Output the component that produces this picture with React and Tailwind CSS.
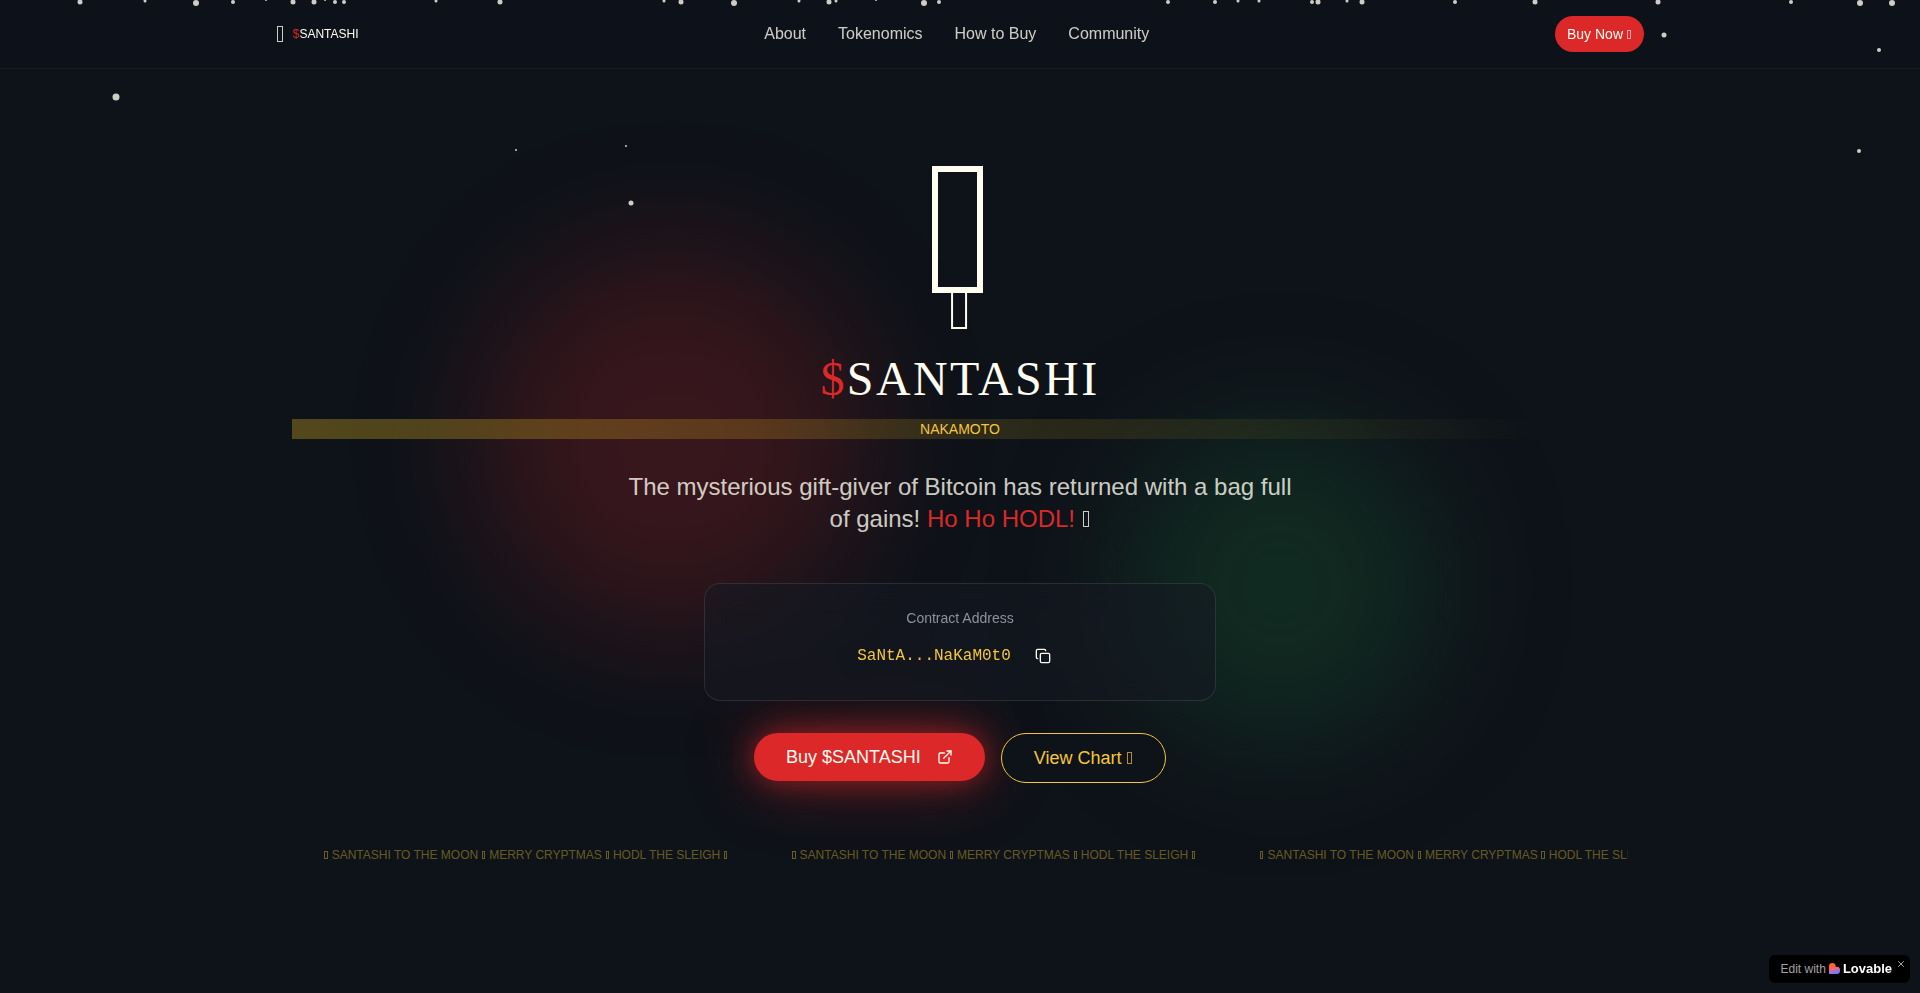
import React from 'react';
import { Copy, ExternalLink, X } from 'lucide-react';

const navLinks = [
  { label: 'About', href: '#about' },
  { label: 'Tokenomics', href: '#tokenomics' },
  { label: 'How to Buy', href: '#how-to-buy' },
  { label: 'Community', href: '#community' },
];

// [center x in % of the width, center y in px, size in px]
const snowflakes = [
  [4.17, 2, 5], [7.55, 1, 3], [10.2, 3, 6], [12.13, 2, 4], [13.85, 0, 2],
  [15.28, 2, 5], [16.38, 2, 5], [16.93, 0, 2], [17.45, 2, 4], [17.92, 2, 4],
  [22.71, 1, 3], [26.04, 2, 5], [34.6, 1, 3], [35.49, 2, 5], [38.23, 3, 6],
  [41.6, 1, 3], [43.2, 2, 5], [43.52, 1, 3], [45.6, 0, 2], [48.12, 3, 6],
  [48.9, 2, 4], [60.83, 2, 4], [63.28, 2, 4], [64.48, 1, 3], [65.57, 1, 3],
  [68.33, 2, 4], [68.62, 2, 5], [70.16, 1, 3], [70.94, 2, 5], [75.78, 2, 4],
  [79.97, 2, 5], [86.33, 2, 5], [93.28, 2, 4], [96.88, 3, 6], [98.54, 3, 6],
  [86.65, 35, 5], [97.86, 50, 4], [6.02, 97, 7], [26.88, 150, 2],
  [32.6, 146, 2], [32.86, 203, 5], [96.82, 151, 4],
];

// Narrow box symbol, scales with the surrounding text
const Symbol = () => (
  <span
    aria-hidden="true"
    className="ml-[0.035em] mr-[0.065em] inline-block h-[0.66em] w-[0.265em] border-[max(1px,0.034em)] border-current"
  />
);

const Snowfall = () => (
  <div className="fixed inset-0 z-50 overflow-hidden pointer-events-none" aria-hidden="true">
    {snowflakes.map(([x, y, size], i) => (
      <span
        key={i}
        className="absolute -translate-x-1/2 -translate-y-1/2 rounded-full bg-[#fffdf0]/80"
        style={{ left: `${x}%`, top: y, width: size, height: size }}
      />
    ))}
  </div>
);

const Navbar = () => (
  <nav className="fixed inset-x-0 top-0 z-40 border-b border-[#181e29] bg-[#0e1219]/80 backdrop-blur-md">
    <div className="mx-auto flex max-w-[1400px] items-center justify-between px-4 py-4">
      <a href="#home" className="flex items-center gap-2">
        <span className="text-2xl leading-8 text-[#fffdf0]/80"><Symbol /></span>
        <span className="text-xs">
          <span className="text-[#dc2828]">$</span>SANTASHI
        </span>
      </a>
      <div className="flex items-center gap-8">
        {navLinks.map((link) => (
          <a key={link.href} href={link.href} className="text-[#fffdf0]/80 hover:text-[#f5c63c]">
            {link.label}
          </a>
        ))}
      </div>
      <button className="h-9 rounded-full bg-[#dc2828] px-3 text-sm hover:bg-red-700">
        Buy Now <span className="opacity-60"><Symbol /></span>
      </button>
    </div>
  </nav>
);

const ContractCard = () => (
  <div className="mx-auto mb-8 w-full max-w-lg rounded-2xl border border-white/10 bg-[#161922]/55 p-6 backdrop-blur-lg">
    <p className="mb-2 text-sm text-[#8b93a1]">Contract Address</p>
    <div className="flex items-center justify-center gap-3">
      <code className="font-['Liberation_Mono',monospace] text-base text-[#f5c63c]">SaNtA...NaKaM0t0</code>
      <button aria-label="Copy address" className="flex h-10 w-10 items-center justify-center rounded-md hover:bg-white/10">
        <Copy className="h-4 w-4" />
      </button>
    </div>
  </div>
);

const Ticker = () => (
  <div className="mt-16 flex overflow-hidden whitespace-nowrap text-xs text-[#f5d030]/40">
    {[0, 1, 2].map((i) => (
      <span key={i} className="mx-8 shrink-0">
        <Symbol /> SANTASHI TO THE MOON <Symbol /> MERRY CRYPTMAS <Symbol /> HODL THE SLEIGH <Symbol />
      </span>
    ))}
  </div>
);

const Hero = () => (
  <section id="home" className="relative flex min-h-screen items-center justify-center overflow-hidden">
    <div className="absolute left-1/4 top-1/4 h-96 w-96 rounded-full bg-[#dc2828]/20 blur-3xl" />
    <div className="absolute bottom-1/4 right-1/4 h-80 w-80 rounded-full bg-[#166534]/30 blur-3xl" />

    <div className="relative w-full max-w-[1400px] px-8 text-center">
      <div className="relative mb-8">
        <div className="text-[192px] leading-none"><Symbol /></div>
        <div className="absolute -bottom-4 left-1/2 -translate-x-1/2 text-6xl"><Symbol /></div>
      </div>

      <h1 className="mb-4 font-['Liberation_Serif',serif] text-5xl tracking-wider">
        <span className="text-[#dc2828]">$</span>SANTASHI
      </h1>
      <p className="mb-8 bg-linear-to-r from-[#f5c820]/30 to-transparent to-95% text-sm text-[#f5c63c]">NAKAMOTO</p>

      <p className="mx-auto mb-12 max-w-2xl text-2xl text-[#fffdf0]/80">
        The mysterious gift-giver of Bitcoin has returned with a bag full of gains!{' '}
        <span className="text-[#dc2828]">Ho Ho HODL!</span> <Symbol />
      </p>

      <ContractCard />

      <div className="flex items-start justify-center gap-4">
        <button className="flex h-12 items-center gap-4 rounded-full bg-[#dc2828] px-8 text-lg shadow-[0_0_30px_rgba(220,40,40,0.6),0_0_70px_rgba(220,40,40,0.4)]">
          Buy $SANTASHI
          <ExternalLink className="h-4 w-4" />
        </button>
        <button className="rounded-full border border-[#f5c63c] bg-[#0e1219] px-8 py-2.5 text-lg text-[#f5c63c]">
          View Chart <span className="opacity-70"><Symbol /></span>
        </button>
      </div>

      <Ticker />
    </div>
  </section>
);

const LovableBadge = () => (
  <div className="fixed bottom-2.5 right-2.5 z-50 flex h-7 items-center rounded-md bg-black pl-3 pr-1 text-xs">
    <a href="#lovable" className="flex items-center gap-[3px]">
      <span className="text-[#a3a3a3]">Edit with</span>
      <svg viewBox="0 0 20 20" className="h-[11px] w-[11px]">
        <defs>
          <linearGradient id="heart" x1="0.3" y1="0" x2="0.6" y2="1">
            <stop offset="0.25" stopColor="#ff6a1f" />
            <stop offset="0.55" stopColor="#f4628c" />
            <stop offset="0.9" stopColor="#6d7cff" />
          </linearGradient>
        </defs>
        <path d="M0 6a6 6 0 0 1 12 0v1h2a6 6 0 0 1 6 6v1a6 6 0 0 1-6 6H0z" fill="url(#heart)" />
      </svg>
      <span className="text-[13px] font-bold text-white">Lovable</span>
    </a>
    <button aria-label="Close" className="ml-1 self-start pt-1 text-[#c4c4c4]">
      <X className="h-2.5 w-2.5" />
    </button>
  </div>
);

const App = () => (
  <main className="min-h-screen bg-[#0e1219] font-['Liberation_Sans',sans-serif] text-[#fffdf0]">
    <Snowfall />
    <Navbar />
    <Hero />
    <LovableBadge />
  </main>
);

export default App;
